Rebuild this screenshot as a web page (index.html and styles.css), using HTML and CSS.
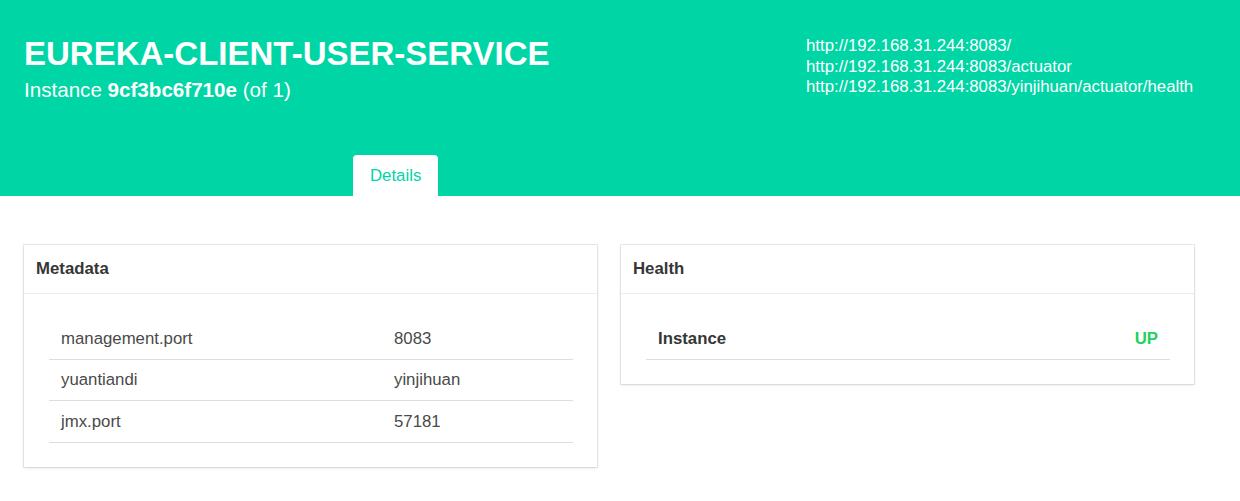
FILE: index.html
```html
<!DOCTYPE html>
<html>
<head>
<meta charset="utf-8">
<link rel="stylesheet" href="styles.css">
</head>
<body>
<header class="hero">
  <div class="hero-top">
    <div class="hero-left">
      <h1 class="title">EUREKA-CLIENT-USER-SERVICE</h1>
      <p class="subtitle">Instance <strong>9cf3bc6f710e</strong> (of 1)</p>
    </div>
    <div class="hero-links">
      <div>http://192.168.31.244:8083/</div>
      <div>http://192.168.31.244:8083/actuator</div>
      <div>http://192.168.31.244:8083/yinjihuan/actuator/health</div>
    </div>
  </div>
  <nav class="tabs">
    <a class="tab is-active">Details</a>
  </nav>
</header>
<main class="content">
  <section class="card">
    <div class="card-header">Metadata</div>
    <div class="card-body">
      <table class="table">
        <tr><td class="key">management.port</td><td>8083</td></tr>
        <tr><td class="key">yuantiandi</td><td>yinjihuan</td></tr>
        <tr><td class="key">jmx.port</td><td>57181</td></tr>
      </table>
    </div>
  </section>
  <section class="card">
    <div class="card-header">Health</div>
    <div class="card-body">
      <table class="table">
        <tr><th class="health-name">Instance</th><td class="status-up">UP</td></tr>
      </table>
    </div>
  </section>
</main>
</body>
</html>
```
FILE: styles.css
```css
* { box-sizing: border-box; }
html, body { margin: 0; padding: 0; background: #fff; }
body {
  font-family: "Liberation Sans", Arial, sans-serif;
  font-size: 16.8px;
  color: #4a4a4a;
}
.hero {
  background: #00d5a5;
  color: #fff;
  height: 196px;
  display: flex;
  flex-direction: column;
}
.hero-top {
  display: flex;
  padding: 0 24px;
  flex: 1;
}
.hero-left { flex: 1; padding-top: 36px; }
.title {
  margin: 0;
  font-size: 33px;
  line-height: 36px;
  font-weight: bold;
}
.subtitle {
  margin: 5px 0 0;
  font-size: 20.6px;
  line-height: 25px;
}
.subtitle strong { font-weight: bold; }
.hero-links {
  width: 410px;
  padding-top: 36px;
  font-size: 16.8px;
  line-height: 20.5px;
}
.tabs {
  display: flex;
  padding-left: 353px;
}
.tab {
  display: block;
  background: #fff;
  color: #00d5a5;
  padding: 8.5px 17px;
  line-height: 24px;
  border-radius: 4px 4px 0 0;
  font-size: 16.8px;
}
.content {
  display: grid;
  grid-template-columns: 573px 573px;
  gap: 24px;
  padding: 49px 24px;
  align-items: start;
}
.card {
  background: #fff;
  box-shadow: 0 1px 3px rgba(10,10,10,.12), 0 0 0 1px rgba(10,10,10,.08);
}
.card-header {
  font-weight: bold;
  color: #363636;
  padding: 12px 12px;
  line-height: 24px;
  border-bottom: 1px solid #ececec;
}
.card-body { padding: 24px 24px 24px 25px; }
.table {
  width: 100%;
  border-collapse: collapse;
}
.table td, .table th {
  padding: 8.5px 12px 8px;
  line-height: 24px;
  border-bottom: 1px solid #dedede;
  text-align: left;
  color: #4a4a4a;
  font-weight: normal;
}
.table .key { width: 333px; }
.table th.health-name {
  font-weight: bold;
  color: #363636;
}
.table td.status-up {
  text-align: right;
  font-weight: bold;
  color: #23d160;
}
```
